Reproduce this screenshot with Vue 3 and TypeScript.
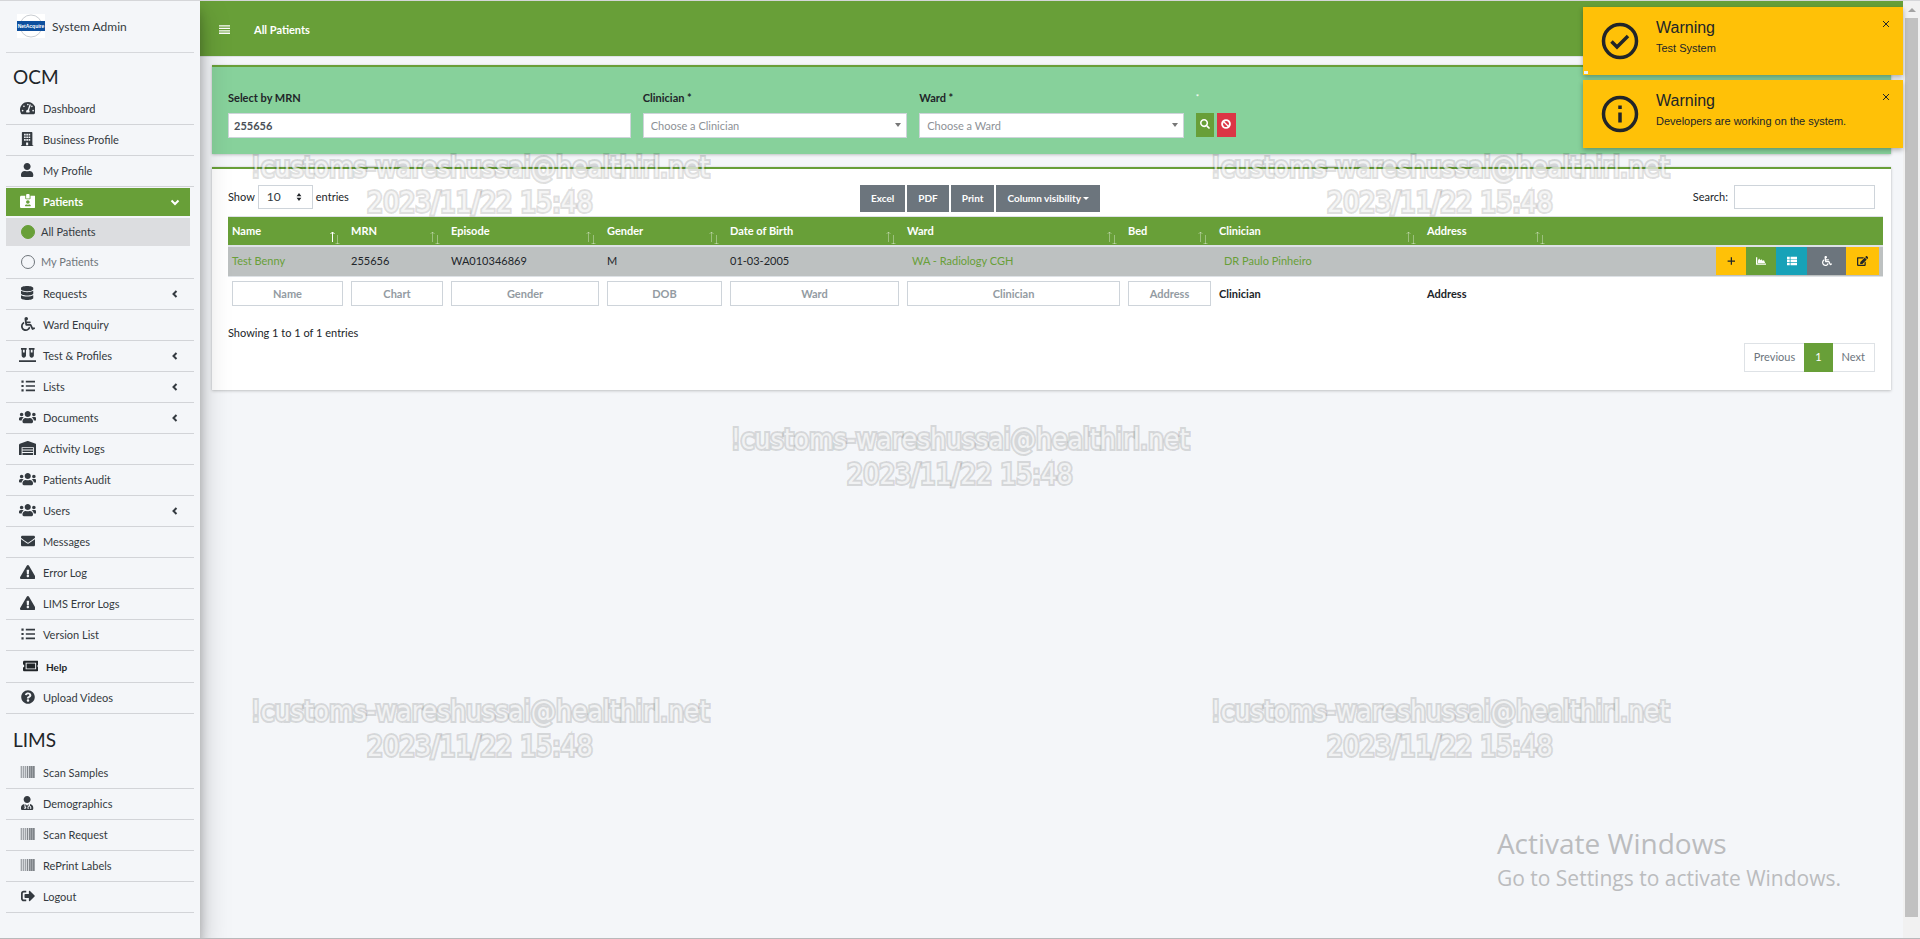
<script setup lang="ts">
import { ref } from 'vue'

interface Glyph {
  box: string
  d: string
}

interface NavItem {
  label: string
  icon: string
  expandable?: boolean
}

const glyphs: Record<string, Glyph> = {
  bars: { box: '0 0 448 512', d: 'M0 82h448v56H0zM0 182h448v56H0zM0 282h448v56H0zM0 382h448v56H0z' },
  gauge: {
    box: '0 0 576 512',
    d: 'M288 32C128.94 32 0 160.94 0 320c0 52.8 14.25 102.26 39.06 144.8 5.61 9.62 16.3 15.2 27.44 15.2h443c11.14 0 21.83-5.58 27.44-15.2C561.75 422.26 576 372.8 576 320c0-159.06-128.94-288-288-288zm0 64c14.71 0 26.58 10.13 30.32 23.65-1.11 2.26-2.64 4.23-3.45 6.67l-9.22 27.67c-5.13 3.49-10.97 6.01-17.64 6.01-17.67 0-32-14.33-32-32S270.33 96 288 96zM96 384c-17.67 0-32-14.33-32-32s14.33-32 32-32 32 14.33 32 32-14.33 32-32 32zm48-160c-17.67 0-32-14.33-32-32s14.33-32 32-32 32 14.33 32 32-14.33 32-32 32zm246.77-72.41l-61.33 184C343.13 347.33 352 364.54 352 384c0 11.72-3.38 22.55-8.88 32H232.88c-5.5-9.45-8.88-20.28-8.88-32 0-33.94 26.5-61.43 59.9-63.59l61.34-184.01c4.17-12.56 17.73-19.45 30.36-15.17 12.57 4.19 19.35 17.79 15.17 30.36zm14.66 57.2l15.52-46.55c3.47-1.29 7.13-2.23 11.05-2.23 17.67 0 32 14.33 32 32s-14.33 32-32 32c-11.38-.01-20.89-6.28-26.57-15.22zM480 384c-17.67 0-32-14.33-32-32s14.33-32 32-32 32 14.33 32 32-14.33 32-32 32z',
  },
  building: {
    box: '0 0 448 512',
    d: 'M436 480h-20V24c0-13-11-24-24-24H56C43 0 32 11 32 24v456H12c-7 0-12 5-12 12v20h448v-20c0-7-5-12-12-12zM112 64h60v60h-60zM194 64h60v60h-60zM276 64h60v60h-60zM112 160h60v60h-60zM194 160h60v60h-60zM276 160h60v60h-60zM112 256h60v60h-60zM194 256h60v60h-60zM276 256h60v60h-60zM186 380h76v100h-76z',
  },
  user: {
    box: '0 0 448 512',
    d: 'M224 256c70.7 0 128-57.3 128-128S294.7 0 224 0 96 57.3 96 128s57.3 128 128 128zm89.6 32h-16.7c-22.2 10.2-46.9 16-72.9 16s-50.6-5.8-72.9-16h-16.7C60.2 288 0 348.2 0 422.4V464c0 26.5 21.5 48 48 48h352c26.5 0 48-21.5 48-48v-41.6c0-74.2-60.2-134.4-134.4-134.4z',
  },
  badge: {
    box: '0 0 576 512',
    d: 'M528 64H384v96c0 18-14 32-32 32H224c-18 0-32-14-32-32V64H48C21.500 64 0 85.500 0 112v352c0 26 22 48 48 48h480c26 0 48-22 48-48V112c0-26-22-48-48-48zM288 224c35 0 64 29 64 64s-29 64-64 64-64-29-64-64 29-64 64-64zm93 224H195c-10 0-18-10-15-20 8-26 32-44 60-44h8c26 10 54 10 80 0h8c28 0 52 18 60 44 3 10-5 20-15 20zM352 32c0-18-14-32-32-32h-64c-18 0-32 14-32 32v128h128z',
  },
  database: {
    box: '0 0 448 512',
    d: 'M448 73v45c0 41-100 73-224 73S0 159 0 118V73C0 33 100 0 224 0s224 33 224 73zM448 176v102c0 41-100 73-224 73S0 319 0 278V176c48 33 136 48 224 48s176-15 224-48zm0 160v103c0 40-100 73-224 73S0 479 0 439V336c48 33 136 48 224 48s176-15 224-48z',
  },
  wheelchair: {
    box: '0 0 512 512',
    d: 'M496.101 385.669l14.227 28.663c3.929 7.915.697 17.516-7.218 21.445l-65.465 32.886c-16.049 7.967-35.556 1.194-43.189-15.055L331.679 320H192c-15.925 0-29.426-11.71-31.679-27.475C126.433 55.308 128.38 70.044 128 64c0-36.358 30.318-65.635 67.052-63.929 33.271 1.545 60.048 28.905 60.925 62.201.868 32.933-23.152 60.423-54.608 65.039l4.67 32.69H336c8.837 0 16 7.163 16 16v32c0 8.837-7.163 16-16 16H215.182l4.572 32H352a32 32 0 0 1 28.962 18.392L438.477 396.8l36.178-18.349c7.915-3.929 17.517-.697 21.446 7.218zM311.358 352h-24.506c-7.788 54.204-54.528 96-110.852 96-61.757 0-112-50.243-112-112 0-41.505 22.694-77.809 56.324-97.156-3.712-25.965-6.844-47.86-9.488-66.333C45.956 198.464 0 261.963 0 336c0 97.047 78.953 176 176 176 71.87 0 133.806-43.308 161.11-105.192L311.358 352z',
  },
  vials: {
    box: '0 0 640 512',
    d: 'M72 0h208v60h-24v212c0 44-36 80-80 80s-80-36-80-80V60H72zM144 60v100h64V60zM360 0h208v60h-24v212c0 44-36 80-80 80s-80-36-80-80V60h-24zM432 60v100h64V60zM0 448h640v64H0z',
  },
  list: {
    box: '0 0 512 512',
    d: 'M16 56h80v80H16zM16 216h80v80H16zM16 376h80v80H16zM176 64h336v60H176zM176 226h336v60H176zM176 388h336v60H176z',
  },
  users: {
    box: '0 0 640 512',
    d: 'M96 224c35.3 0 64-28.7 64-64s-28.7-64-64-64-64 28.7-64 64 28.7 64 64 64zm448 0c35.3 0 64-28.7 64-64s-28.7-64-64-64-64 28.7-64 64 28.7 64 64 64zm32 32h-64c-17.6 0-33.5 7.1-45.1 18.6 40.3 22.1 68.9 62 75.1 109.4h66c17.7 0 32-14.3 32-32v-32c0-35.3-28.7-64-64-64zm-256 0c61.9 0 112-50.1 112-112S381.9 32 320 32 208 82.1 208 144s50.1 112 112 112zm76.8 32h-8.3c-20.8 10-43.9 16-68.5 16s-47.6-6-68.5-16h-8.3C179.6 288 128 339.6 128 403.2V432c0 26.5 21.5 48 48 48h288c26.5 0 48-21.5 48-48v-28.8c0-63.6-51.6-115.2-115.2-115.2zm-223.7-13.4C161.5 263.1 145.6 256 128 256H64c-35.3 0-64 28.700-64 64v32c0 17.7 14.3 32 32 32h65.9c6.3-47.4 34.9-87.3 75.2-109.4z',
  },
  warehouse: {
    box: '0 0 640 512',
    d: 'M0 512V148c0-19 12-37 30-44L308 2c8-3 16-3 24 0l278 102c18 7 30 25 30 44v364h-96V224H96v288zM128 256h384v56H128zM128 346h384v56H128zM128 436h384v76H128z',
  },
  envelope: {
    box: '0 0 512 512',
    d: 'M502.3 190.8c3.9-3.1 9.7-.2 9.7 4.7V400c0 26.5-21.5 48-48 48H48c-26.5 0-48-21.5-48-48V195.6c0-5 5.7-7.8 9.7-4.7 22.4 17.4 52.1 39.5 154.1 113.6 21.1 15.4 56.7 47.8 92.2 47.6 35.7.3 72-32.8 92.3-47.6 102-74.1 131.6-96.3 154-113.7zM256 320c23.2.4 56.6-29.2 73.4-41.4 132.7-96.3 142.8-104.7 173.4-128.7 5.8-4.5 9.2-11.5 9.2-18.9v-19c0-26.5-21.5-48-48-48H48c-26.5 0-48 21.500-48 48v19c0 7.4 3.4 14.3 9.2 18.9 30.6 23.9 40.7 32.4 173.4 128.7 16.8 12.2 50.2 41.8 73.4 41.4z',
  },
  warning: {
    box: '0 0 576 512',
    d: 'M569.517 440.013C587.975 472.007 564.806 512 527.94 512H48.054c-36.937 0-59.999-40.055-41.577-71.987L246.423 23.985c18.467-32.009 64.72-31.951 83.154 0l239.94 416.028zM288 354c-25.405 0-46 20.595-46 46s20.595 46 46 46 46-20.595 46-46-20.595-46-46-46zm-43.673-165.346l7.418 136c.347 6.364 5.609 11.346 11.982 11.346h48.546c6.373 0 11.635-4.982 11.982-11.346l7.418-136c.375-6.874-5.098-12.654-11.982-12.654h-63.383c-6.884 0-12.356 5.78-11.981 12.654z',
  },
  ticket: {
    box: '0 0 576 512',
    d: 'M0 112c0-26 22-48 48-48h480c26 0 48 22 48 48v90c-28 0-48 24-48 54s20 54 48 54v90c0 26-22 48-48 48H48c-26 0-48-22-48-48v-90c28 0 48-24 48-54s-20-54-48-54zM96 136v240h384V136zM132 168h312v176H132z',
  },
  question: {
    box: '0 0 512 512',
    d: 'M504 256c0 136.997-111.043 248-248 248S8 392.997 8 256C8 119.083 119.043 8 256 8s248 111.083 248 248zM262.655 90c-54.497 0-89.255 22.957-116.549 63.758-3.536 5.286-2.353 12.415 2.715 16.258l34.699 26.31c5.205 3.947 12.621 3.008 16.665-2.122 17.864-22.658 30.113-35.797 57.303-35.797 20.429 0 45.698 13.148 45.698 32.958 0 14.976-12.363 22.667-32.534 33.976C247.128 238.528 216 254.941 216 296v4c0 6.627 5.373 12 12 12h56c6.627 0 12-5.373 12-12v-1.333c0-28.462 83.186-29.647 83.186-106.667 0-58.002-60.165-102-116.531-102zM256 338c-25.365 0-46 20.635-46 46 0 25.364 20.635 46 46 46s46-20.636 46-46c0-25.365-20.635-46-46-46z',
  },
  doctor: {
    box: '0 0 448 512',
    d: 'M224 256c71 0 128-57 128-128S295 0 224 0 96 57 96 128s57 128 128 128zM120 290C48 300 0 356 0 422v42c0 26 22 48 48 48h352c26 0 48-22 48-48v-42c0-66-48-122-120-132v62c30 10 48 34 48 66v46h-50v-34h16c0-60-72-60-72 0h16v34h-50v-46c0-32 16-54 44-64v-58l-56 64-64-64v80c20 8 32 24 32 42 0 26-20 46-46 46s-46-20-46-46c0-18 12-34 30-42zM104 392h36v36h-36z',
  },
  logout: {
    box: '0 0 512 512',
    d: 'M497 273L329 441c-15 15-41 4.5-41-17v-96H152c-13.3 0-24-10.7-24-24v-96c0-13.3 10.7-24 24-24h136V88c0-21.4 25.9-32 41-17l168 168c9.3 9.4 9.3 24.6 0 34zM192 436v-40c0-6.6-5.4-12-12-12H96c-17.7 0-32-14.3-32-32V160c0-17.7 14.3-32 32-32h84c6.6 0 12-5.4 12-12V76c0-6.6-5.400-12-12-12H96c-53 0-96 43-96 96v192c0 53 43 96 96 96h84c6.6 0 12-5.4 12-12z',
  },
  search: {
    box: '0 0 512 512',
    d: 'M505 442.7L405.3 343c-4.5-4.5-10.6-7-17-7H372c27.6-35.3 44-79.7 44-128C416 93.1 322.9 0 208 0S0 93.1 0 208s93.1 208 208 208c48.3 0 92.7-16.4 128-44v16.3c0 6.4 2.5 12.5 7 17l99.7 99.7c9.4 9.4 24.6 9.4 33.9 0l28.3-28.3c9.4-9.4 9.4-24.6.1-34zM208 336c-70.700 0-128-57.2-128-128 0-70.7 57.2-128 128-128 70.7 0 128 57.2 128 128 0 70.7-57.2 128-128 128z',
  },
  ban: {
    box: '0 0 512 512',
    d: 'M256 8a248 248 0 1 0 0 496 248 248 0 1 0 0-496zM130 176l206 206A148 148 0 0 1 130 176zM382 336L176 130A148 148 0 0 1 382 336z',
  },
  plus: { box: '0 0 448 512', d: 'M192 64h64v160h160v64H256v160h-64V288H32v-64h160z' },
  chart: { box: '0 0 512 512', d: 'M0 64h64v320h448v64H0zM96 352V240l60-110 80 90 60-60 50 90 60-40 60 142z' },
  table: {
    box: '0 0 512 512',
    d: 'M0 40h140v120H0zM180 40h332v120H180zM0 196h140v120H0zM180 196h332v120H180zM0 352h140v120H0zM180 352h332v120H180z',
  },
  edit: {
    box: '0 0 576 512',
    d: 'M402.6 83.2l90.2 90.2c3.8 3.8 3.8 10 0 13.8L274.4 405.6l-92.8 10.3c-12.4 1.4-22.9-9.1-21.5-21.5l10.3-92.8L388.8 83.2c3.8-3.8 10-3.8 13.8 0zm162-22.9l-48.8-48.8c-15.2-15.2-39.9-15.2-55.2 0l-35.4 35.4c-3.8 3.8-3.8 10 0 13.8l90.2 90.2c3.8 3.8 10 3.8 13.8 0l35.4-35.4c15.2-15.3 15.2-40 0-55.2zM384 346.2V448H64V128h229.800c3.2 0 6.2-1.3 8.5-3.5l40-40c7.6-7.6 2.2-20.5-8.5-20.5H48C21.5 64 0 85.5 0 112v352c0 26.5 21.5 48 48 48h352c26.5 0 48-21.5 48-48V306.2c0-10.7-12.9-16-20.5-8.5l-40 40c-2.2 2.3-3.5 5.3-3.5 8.5z',
  },
}

const ocmTop: NavItem[] = [
  { label: 'Dashboard', icon: 'gauge' },
  { label: 'Business Profile', icon: 'building' },
  { label: 'My Profile', icon: 'user' },
]

const ocmRest: NavItem[] = [
  { label: 'Requests', icon: 'database', expandable: true },
  { label: 'Ward Enquiry', icon: 'wheelchair' },
  { label: 'Test & Profiles', icon: 'vials', expandable: true },
  { label: 'Lists', icon: 'list', expandable: true },
  { label: 'Documents', icon: 'users', expandable: true },
  { label: 'Activity Logs', icon: 'warehouse' },
  { label: 'Patients Audit', icon: 'users' },
  { label: 'Users', icon: 'users', expandable: true },
  { label: 'Messages', icon: 'envelope' },
  { label: 'Error Log', icon: 'warning' },
  { label: 'LIMS Error Logs', icon: 'warning' },
  { label: 'Version List', icon: 'list' },
  { label: 'Help', icon: 'ticket' },
  { label: 'Upload Videos', icon: 'question' },
]

const lims: NavItem[] = [
  { label: 'Scan Samples', icon: 'barcode' },
  { label: 'Demographics', icon: 'doctor' },
  { label: 'Scan Request', icon: 'barcode' },
  { label: 'RePrint Labels', icon: 'barcode' },
  { label: 'Logout', icon: 'logout' },
]

const columns = [
  { title: 'Name', filter: 'Name', width: 119 },
  { title: 'MRN', filter: 'Chart', width: 100 },
  { title: 'Episode', filter: 'Gender', width: 156 },
  { title: 'Gender', filter: 'DOB', width: 123 },
  { title: 'Date of Birth', filter: 'Ward', width: 177 },
  { title: 'Ward', filter: 'Clinician', width: 221 },
  { title: 'Bed', filter: 'Address', width: 91 },
  { title: 'Clinician', filter: '', width: 208 },
  { title: 'Address', filter: '', width: 129 },
  { title: '', filter: '', width: 331 },
]

const actions = [
  { icon: 'plus', tone: 'amber', label: 'Add' },
  { icon: 'chart', tone: 'green', label: 'Chart' },
  { icon: 'table', tone: 'teal', label: 'Results' },
  { icon: 'wheelchair', tone: 'grey', label: 'Ward' },
  { icon: 'edit', tone: 'amber', label: 'Edit' },
]

const toasts = [
  { kind: 'check', title: 'Warning', text: 'Test System' },
  { kind: 'info', title: 'Warning', text: 'Developers are working on the system.' },
]

const exports = ['Excel', 'PDF', 'Print']
const bars = [0, 1, 2, 3, 4, 5, 6]
const marks = ['nw', 'ne', 'mid', 'sw', 'se']
const mrn = ref('255656')
const search = ref('')
</script>

<template>
  <div class="page">
    <aside class="sidebar">
      <a class="brand" href="#">
        <svg class="logo" viewBox="0 0 28 24" aria-hidden="true">
          <rect width="28" height="24" fill="#fff" />
          <circle cx="14" cy="12" r="11" fill="none" stroke="#c9cdd2" />
          <rect y="7" width="28" height="10" fill="#0d4f9e" />
          <text x="14" y="14" text-anchor="middle" font-family="Liberation Sans, sans-serif" font-weight="700" font-size="5" fill="#fff">NetAcquire</text>
        </svg>
        <span>System Admin</span>
      </a>

      <nav>
        <h2>OCM</h2>
        <ul>
          <li v-for="item in ocmTop" :key="item.label" class="row">
            <a href="#" class="link">
              <span class="ico"><svg :viewBox="glyphs[item.icon].box"><path :d="glyphs[item.icon].d" fill-rule="evenodd" /></svg></span>
              {{ item.label }}
            </a>
          </li>
          <li class="row open">
            <a href="#" class="link current">
              <span class="ico"><svg :viewBox="glyphs.badge.box"><path :d="glyphs.badge.d" fill-rule="evenodd" /></svg></span>
              Patients
              <svg class="chev" viewBox="0 0 10 10"><path d="M1.500 3.500L5 7l3.500-3.500" /></svg>
            </a>
            <ul class="sub">
              <li><a href="#" class="active"><i class="dot full"></i>All Patients</a></li>
              <li><a href="#"><i class="dot"></i>My Patients</a></li>
            </ul>
          </li>
          <li v-for="item in ocmRest" :key="item.label" class="row" :class="{ help: item.icon === 'ticket' }">
            <a href="#" class="link">
              <span class="ico"><svg :viewBox="glyphs[item.icon].box"><path :d="glyphs[item.icon].d" fill-rule="evenodd" /></svg></span>
              {{ item.label }}
              <svg v-if="item.expandable" class="chev" viewBox="0 0 10 10"><path d="M6.500 2L3.500 5l3 3" /></svg>
            </a>
          </li>
        </ul>

        <h2 class="second">LIMS</h2>
        <ul>
          <li v-for="item in lims" :key="item.label" class="row">
            <a href="#" class="link">
              <span class="ico">
                <svg v-if="item.icon === 'barcode'" viewBox="0 0 15 14">
                  <rect y="1" width="15" height="12" fill="#d4d7db" />
                  <rect v-for="b in bars" :key="b" :x="b * 2 + 1" y="1" width="1" height="12" :fill="b < 3 ? '#a0a4a9' : '#83878c'" />
                  <rect x="10" y="1" width="5" height="12" fill="#7c8086" opacity="0.6" />
                </svg>
                <svg v-else :viewBox="glyphs[item.icon].box"><path :d="glyphs[item.icon].d" fill-rule="evenodd" /></svg>
              </span>
              {{ item.label }}
            </a>
          </li>
        </ul>
      </nav>
    </aside>

    <div class="body">
      <header class="topbar">
        <button class="burger" type="button" aria-label="Toggle menu">
          <svg :viewBox="glyphs.bars.box"><path :d="glyphs.bars.d" /></svg>
        </button>
        <h1>All Patients</h1>
      </header>

      <main>
        <form class="card filter" @submit.prevent>
          <div class="field wide">
            <label for="mrn">Select by MRN</label>
            <input id="mrn" v-model="mrn" type="text" />
          </div>
          <div class="field">
            <label for="clinician">Clinician *</label>
            <div class="pick">
              <select id="clinician"><option>Choose a Clinician</option></select>
            </div>
          </div>
          <div class="field">
            <label for="ward">Ward *</label>
            <div class="pick">
              <select id="ward"><option>Choose a Ward</option></select>
            </div>
          </div>
          <div class="field go">
            <span class="dotlabel">*</span>
            <div class="pair">
              <button type="submit" class="find" aria-label="Search">
                <svg :viewBox="glyphs.search.box"><path :d="glyphs.search.d" fill-rule="evenodd" /></svg>
              </button>
              <button type="reset" class="clear" aria-label="Clear">
                <svg :viewBox="glyphs.ban.box"><path :d="glyphs.ban.d" fill-rule="evenodd" /></svg>
              </button>
            </div>
          </div>
        </form>

        <section class="card results">
          <div class="tools">
            <div class="length">
              <label for="len">Show</label>
              <span class="len">
                <select id="len"><option>10</option></select>
                <svg viewBox="0 0 6 10"><path d="M0 4l3-4 3 4zM0 6h6l-3 4z" /></svg>
              </span>
              <span>entries</span>
            </div>
            <div class="exports">
              <button v-for="name in exports" :key="name" type="button">{{ name }}</button>
              <button type="button">Column visibility<i class="caret"></i></button>
            </div>
            <div class="find-in">
              <label for="search">Search:</label>
              <input id="search" v-model="search" type="search" />
            </div>
          </div>

          <table>
            <colgroup>
              <col v-for="(c, i) in columns" :key="i" :style="{ width: c.width + 'px' }" />
            </colgroup>
            <thead>
              <tr>
                <th v-for="(c, i) in columns" :key="i" scope="col">
                  {{ c.title }}
                  <svg v-if="c.title" class="sort" :class="{ asc: i === 0 }" viewBox="0 0 12 14">
                    <path class="up" d="M3.500 12V2M1.500 4l2-2 2 2" />
                    <path class="down" d="M8.500 5v9M6.500 13.500h4" />
                  </svg>
                </th>
              </tr>
            </thead>
            <tbody>
              <tr>
                <td><a href="#">Test Benny</a></td>
                <td>255656</td>
                <td>WA010346869</td>
                <td>M</td>
                <td>01-03-2005</td>
                <td><a href="#" class="inset">WA - Radiology CGH</a></td>
                <td></td>
                <td><a href="#" class="inset">DR Paulo Pinheiro</a></td>
                <td></td>
                <td class="acts">
                  <div>
                    <button v-for="a in actions" :key="a.label" type="button" :class="a.tone" :aria-label="a.label">
                      <svg :viewBox="glyphs[a.icon].box"><path :d="glyphs[a.icon].d" fill-rule="evenodd" /></svg>
                    </button>
                  </div>
                </td>
              </tr>
            </tbody>
            <tfoot>
              <tr>
                <th v-for="(c, i) in columns" :key="i">
                  <input v-if="c.filter" type="text" :placeholder="c.filter" :aria-label="c.filter" />
                  <template v-else>{{ c.title }}</template>
                </th>
              </tr>
            </tfoot>
          </table>

          <p class="info">Showing 1 to 1 of 1 entries</p>
          <div class="pager">
            <button type="button">Previous</button>
            <button type="button" class="on">1</button>
            <button type="button">Next</button>
          </div>
        </section>
      </main>
    </div>

    <div class="scroll" aria-hidden="true">
      <i class="arrow"></i>
      <i class="thumb"></i>
    </div>

    <div class="toasts">
      <div v-for="t in toasts" :key="t.kind" class="toast" role="alert">
        <svg class="ring" viewBox="0 0 38 38">
          <circle cx="19" cy="19" r="16.500" />
          <path v-if="t.kind === 'check'" d="M10.500 19.500l5.500 5.500 11-11" />
          <path v-else d="M19 17.500v10M19 10.500v3.500" />
        </svg>
        <div class="msg">
          <strong>{{ t.title }}</strong>
          <span>{{ t.text }}</span>
        </div>
        <button type="button" aria-label="Close">
          <svg viewBox="0 0 8 8"><path d="M1 1l6 6M7 1L1 7" /></svg>
        </button>
        <i v-if="t.kind === 'check'" class="nub"></i>
      </div>
    </div>

    <div class="marks" aria-hidden="true">
      <p v-for="m in marks" :key="m" :class="m">!customs-wareshussai@healthirl.net<br />2023/11/22 15:48</p>
    </div>

    <div class="activate">
      <p class="big">Activate Windows</p>
      <p>Go to Settings to activate Windows.</p>
    </div>
  </div>
</template>

<style>
body {
  margin: 0;
}
</style>

<style scoped>
* {
  box-sizing: border-box;
}

.page {
  position: relative;
  display: flex;
  min-height: 100vh;
  overflow: hidden;
  border-top: 1px solid #d5d6d9;
  border-bottom: 1px solid #b9b9bb;
  background: #f4f6f9;
  color: #212529;
  font: 400 11px/16px Lato, "Noto Sans", sans-serif;
}

button,
input,
select {
  margin: 0;
  padding: 0;
  border: 0;
  border-radius: 0;
  background: none;
  color: inherit;
  font: inherit;
}

svg {
  display: block;
  fill: currentColor;
}

a {
  color: inherit;
  text-decoration: none;
}

ul {
  margin: 0;
  padding: 0;
  list-style: none;
}

/* Sidebar */
.sidebar {
  z-index: 2;
  flex: none;
  width: 200px;
  padding: 0 6px;
  background: #f4f6f9;
  box-shadow: 0 14px 28px rgba(0, 0, 0, 0.25), 0 10px 10px rgba(0, 0, 0, 0.22);
  color: #343a40;
}

.brand {
  display: flex;
  align-items: center;
  gap: 7px;
  height: 52px;
  padding-left: 11px;
  border-bottom: 1px solid #d6d8dc;
  font-size: 12px;
}

.logo {
  width: 28px;
  height: 24px;
  margin-bottom: 2px;
}

h2 {
  margin: 11px 0 4px;
  padding-left: 7px;
  color: #212529;
  font-size: 19px;
  font-weight: 400;
  line-height: 26px;
}

h2.second {
  margin: 13px 0 5px;
}

.row {
  border-bottom: 1px solid #d2d4d8;
}

.link {
  display: flex;
  align-items: center;
  gap: 5px;
  height: 30px;
  padding: 0 14px 0 11px;
}

.ico {
  display: flex;
  flex: none;
  justify-content: center;
  width: 21px;
}

.ico svg {
  height: 14px;
  margin-bottom: 2px;
}

.chev {
  width: 10px;
  height: 10px;
  margin-left: auto;
  fill: none;
  stroke: currentColor;
  stroke-width: 2;
}

.help .link {
  height: 31px;
  padding-left: 14px;
  font-size: 10px;
  font-weight: 700;
  color: #212529;
}

.open {
  padding: 1px 4px 1px 0;
}

.link.current {
  height: 28px;
  padding-right: 10px;
  background: #689f38;
  color: #fff;
  font-weight: 700;
}

.sub a {
  display: flex;
  align-items: center;
  gap: 6px;
  height: 28px;
  margin-top: 2px;
  padding-left: 15px;
  color: #6f757b;
}

.sub a.active {
  background: #dcdde0;
  color: #343a40;
}

.sub li:last-child {
  padding-bottom: 1px;
}

.dot {
  width: 14px;
  height: 14px;
  border: 1px solid #6f757b;
  border-radius: 50%;
}

.dot.full {
  border-color: #689f38;
  background: #689f38;
}

/* Main area */
.body {
  flex: 1;
  min-width: 0;
}

.topbar {
  display: flex;
  align-items: center;
  gap: 24px;
  height: 56px;
  padding: 2px 0 0 19px;
  border-bottom: 1px solid #dee2e6;
  background: #689f38;
  color: #fff;
}

.burger svg {
  width: 11px;
  height: 13px;
}

h1 {
  margin: 0;
  font-size: 11px;
  font-weight: 700;
}

main {
  padding: 8px 12px;
}

.card {
  margin-bottom: 13px;
  border-top: 2px solid #689f38;
  background: #fff;
  box-shadow: 0 0 1px rgba(0, 0, 0, 0.13), 0 1px 3px rgba(0, 0, 0, 0.2);
}

.filter {
  display: flex;
  padding: 23px 10px 16px;
  background: #87d19b;
}

.field {
  width: 16.667%;
  padding: 0 6px;
}

.field.wide {
  width: 25%;
}

.field label {
  display: block;
  margin-bottom: 7px;
  font-weight: 700;
}

.field input,
.pick select {
  display: block;
  width: 100%;
  height: 25px;
  border: 1px solid #ced4da;
  background: #fff;
}

.field input {
  padding: 0 5px;
  color: #495057;
  font-weight: 700;
}

.pick {
  position: relative;
}

.pick select {
  appearance: none;
  padding: 0 7px;
  color: #8d9196;
}

.pick::after {
  content: "";
  position: absolute;
  top: 10px;
  right: 6px;
  border: 3px solid transparent;
  border-top: 4px solid #777;
  border-bottom: 0;
}

.dotlabel {
  display: block;
  height: 16px;
  margin-bottom: 7px;
  color: #fff;
  font-size: 8px;
  line-height: 14px;
}

.pair {
  display: flex;
  gap: 3px;
}

.pair button {
  display: grid;
  place-items: center;
  width: 18px;
  height: 24px;
  color: #fff;
}

.pair svg {
  width: 10px;
  height: 10px;
  margin-bottom: 2px;
}

.find {
  background: #689f38;
}

.pair .clear {
  width: 19px;
  background: #dc3545;
}

/* Results */
.results {
  padding: 16px 8px 18px 16px;
}

.tools {
  display: grid;
  grid-template-columns: 4fr 3fr 5fr;
  align-items: start;
  margin: 0 8px 4px 0;
}

.length,
.find-in {
  display: flex;
  align-items: center;
  gap: 4px;
  height: 24px;
}

.length {
  gap: 3px;
}

.find-in {
  justify-content: flex-end;
  gap: 6px;
}

.find-in input {
  width: 141px;
  height: 24px;
  padding: 0 5px;
  border: 1px solid #ced4da;
}

.len {
  position: relative;
}

.len select {
  appearance: none;
  display: block;
  width: 55px;
  height: 24px;
  padding: 0 8px;
  border: 1px solid #ced4da;
  color: #343a40;
  font-size: 12px;
}

.len svg {
  position: absolute;
  top: 8px;
  right: 11px;
  width: 6px;
  height: 8px;
}

.exports {
  display: flex;
  gap: 2px;
  padding-left: 83px;
}

.exports button {
  height: 27px;
  padding: 0 11px 2px;
  background: #6c757d;
  color: #fff;
  font-size: 10px;
  font-weight: 700;
  white-space: nowrap;
}

.caret {
  display: inline-block;
  margin-left: 2px;
  border: 3px solid transparent;
  border-top-color: #fff;
  border-bottom: 0;
  vertical-align: 2px;
}

table {
  width: 100%;
  table-layout: fixed;
  border-collapse: collapse;
}

th,
td {
  padding: 0 4px;
  text-align: left;
}

thead th {
  position: relative;
  height: 29px;
  border-top: 1px solid #dee2e6;
  border-bottom: 2px solid #dee2e6;
  background: #689f38;
  background-clip: padding-box;
  color: #fff;
}

.sort {
  position: absolute;
  right: 6px;
  bottom: 1px;
  width: 12px;
  height: 14px;
  fill: none;
  stroke: #fff;
}

.sort path {
  opacity: 0.35;
}

.sort.asc .up {
  opacity: 1;
}

tbody td {
  height: 31px;
  border-bottom: 1px solid #dee2e6;
  background: #bdc1c1;
}

tbody a {
  color: #689f38;
}

.inset {
  padding-left: 5px;
}

.acts div {
  display: flex;
  justify-content: flex-end;
}

.acts button {
  display: grid;
  place-items: center;
  width: 30px;
  height: 28px;
  color: #fff;
}

.acts svg {
  height: 10px;
}

.acts button.amber {
  background: #ffc107;
  color: #212529;
}

.acts button.amber:last-child {
  width: 33px;
}

.acts .green {
  background: #689f38;
}

.acts .teal {
  width: 31px;
  background: #17a2b8;
}

.acts .grey {
  width: 39px;
  background: #6c757d;
}

tfoot th {
  height: 34px;
}

tfoot input {
  display: block;
  width: 100%;
  height: 25px;
  border: 1px solid #ced4da;
  text-align: center;
}

tfoot input::placeholder {
  color: #939ba2;
  opacity: 1;
}

.info {
  margin: 14px 0 2px;
}

.pager {
  display: flex;
  justify-content: flex-end;
  margin-right: 8px;
}

.pager button {
  height: 29px;
  padding: 0 9px;
  border: 1px solid #dee2e6;
  color: #6c757d;
}

.pager button + button {
  margin-left: -1px;
}

.pager .on {
  position: relative;
  padding: 0 10px;
  border-color: #689f38;
  background: #689f38;
  color: #fff;
}

/* Browser scrollbar */
.scroll {
  display: flex;
  flex: none;
  flex-direction: column;
  align-items: center;
  width: 17px;
  background: #f1f1f1;
}

.arrow {
  margin: 7px 0 6px;
  border: 4px solid transparent;
  border-top: 0;
  border-bottom-color: #a3a3a3;
}

.thumb {
  flex: 1;
  width: 13px;
  margin-bottom: 21px;
  background: #c1c1c1;
}

/* Overlays */
.toasts {
  position: absolute;
  z-index: 3;
  top: 6px;
  right: 17px;
  display: grid;
  gap: 5px;
}

.toast {
  position: relative;
  display: flex;
  align-items: flex-start;
  gap: 17px;
  width: 320px;
  height: 68px;
  padding: 10px 13px 0 18px;
  background: #ffc107;
  box-shadow: 0 2px 5px rgba(0, 0, 0, 0.3);
  font-family: "Liberation Sans", Arial, sans-serif;
}

.ring {
  width: 38px;
  height: 38px;
  margin-top: 5px;
  fill: none;
  stroke: #212529;
  stroke-width: 3.500;
}

.msg {
  flex: 1;
}

.msg strong {
  display: block;
  font-size: 16px;
  font-weight: 400;
  line-height: 22px;
}

.msg span {
  display: block;
  margin-top: 1px;
}

.toast button svg {
  width: 8px;
  height: 8px;
  margin-top: 3px;
  fill: none;
  stroke: #212529;
}

.nub {
  position: absolute;
  bottom: 1px;
  left: 1px;
  width: 4px;
  height: 3px;
  background: #eceff1;
}

.marks {
  position: absolute;
  z-index: 1;
  inset: 149px 0 174px;
  display: grid;
  grid-template: auto auto auto / repeat(4, 1fr);
  align-content: space-between;
  pointer-events: none;
}

.marks p {
  justify-self: center;
  margin: 0;
  color: rgba(255, 255, 255, 0.7);
  font: 28px/35px "DejaVu Sans Condensed", "DejaVu Sans", sans-serif;
  text-align: center;
  white-space: nowrap;
  paint-order: stroke fill;
  -webkit-text-stroke: 4px rgba(0, 0, 0, 0.12);
}

.nw {
  grid-area: 1 / 1 / 2 / 3;
}

.ne {
  grid-area: 1 / 3 / 2 / 5;
}

.mid {
  grid-area: 2 / 2 / 3 / 4;
}

.sw {
  grid-area: 3 / 1 / 4 / 3;
}

.se {
  grid-area: 3 / 3 / 4 / 5;
}

.activate {
  position: absolute;
  right: 79px;
  bottom: 44px;
  color: #bbbcbe;
  font: 21px/32px "Open Sans", sans-serif;
}

.activate p {
  margin: 0;
}

.activate .big {
  font-size: 28px;
  line-height: 38px;
}
</style>
